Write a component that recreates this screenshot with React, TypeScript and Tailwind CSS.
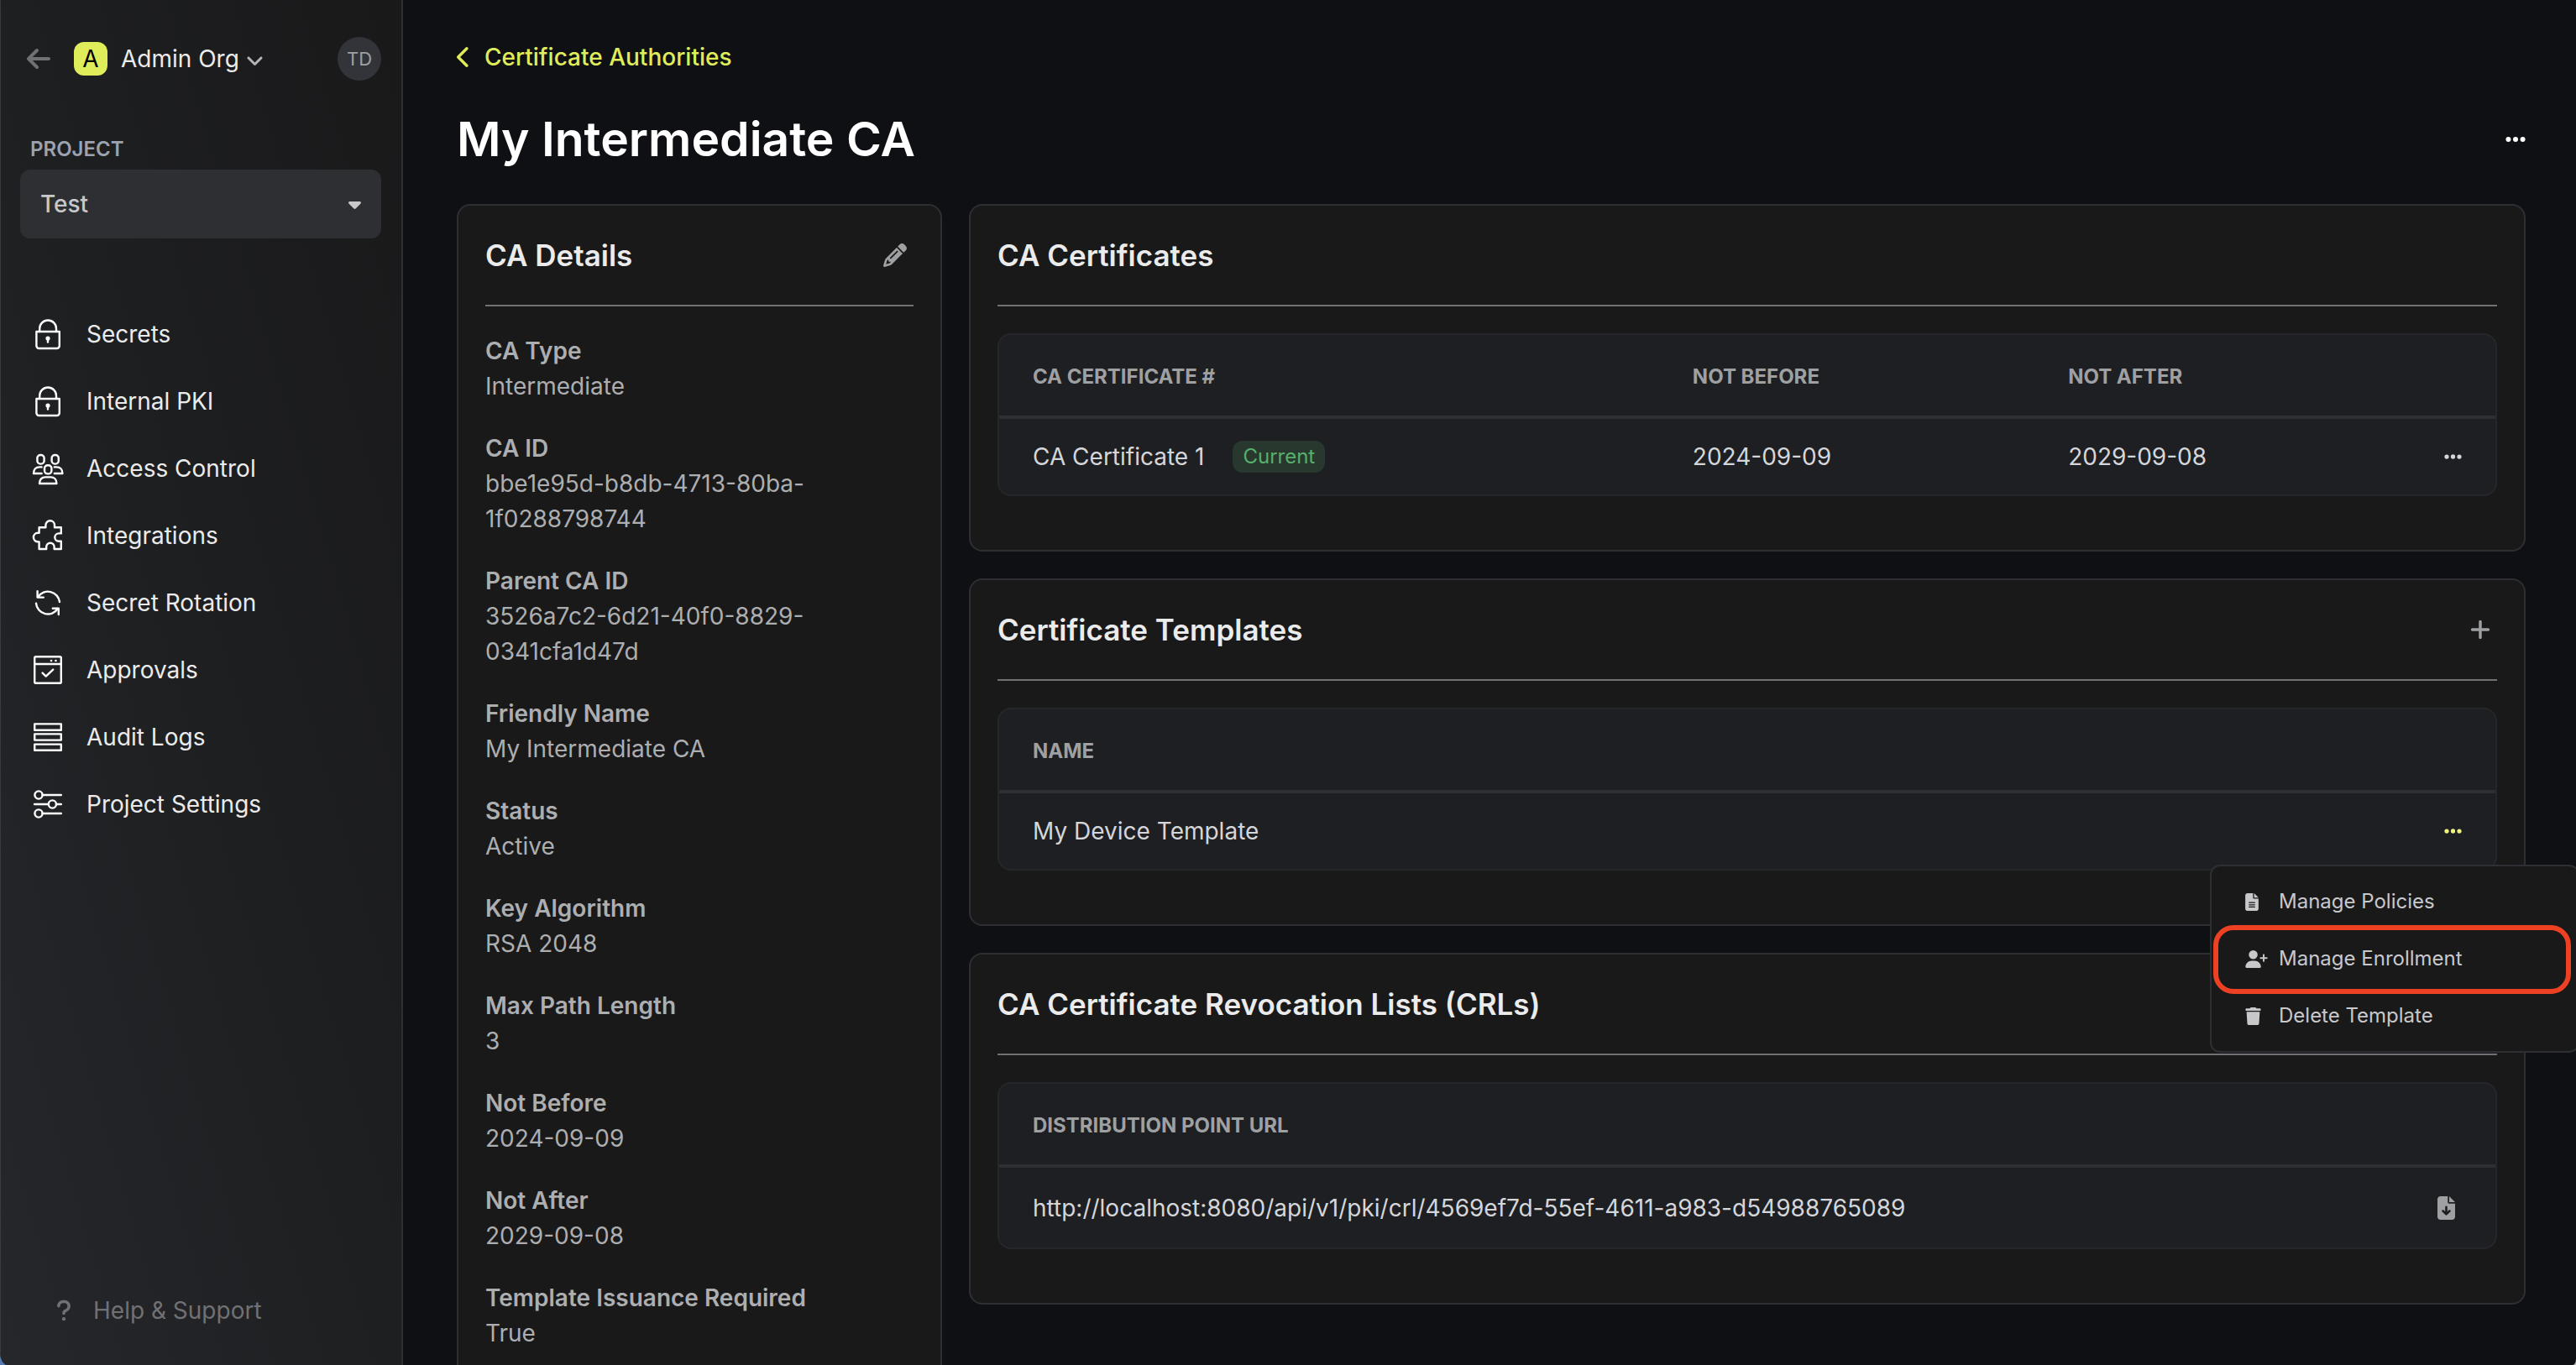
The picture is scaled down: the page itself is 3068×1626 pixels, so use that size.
import type { ReactNode } from "react";
import {
  FaAngleDown,
  FaArrowLeft,
  FaCaretDown,
  FaChevronLeft,
  FaEllipsis,
  FaFileArrowDown,
  FaFileLines,
  FaPencil,
  FaPlus,
  FaQuestion,
  FaTrash,
  FaUserPlus,
} from "react-icons/fa6";

function LineIcon({ children }: { children: ReactNode }) {
  return (
    <svg
      viewBox="0 0 40 40"
      className="size-10 shrink-0"
      fill="none"
      stroke="white"
      strokeWidth="2.4"
      strokeLinecap="round"
      strokeLinejoin="round"
      aria-hidden="true"
    >
      {children}
    </svg>
  );
}

const lockIcon = (
  <LineIcon>
    <path d="M6.4 17h27.4v17a3 3 0 0 1-3 3H9.4a3 3 0 0 1-3-3z" />
    <path d="M10.2 17v-3.6a9.9 9.9 0 0 1 19.8 0V17" />
    <circle cx="20" cy="25" r="1.4" fill="white" />
    <path d="M20 26v3.6" />
  </LineIcon>
);

const groupIcon = (
  <LineIcon>
    <rect x="7.4" y="4" width="8.2" height="10.6" rx="3.8" />
    <rect x="24.6" y="4" width="8.2" height="10.6" rx="3.8" />
    <rect x="16" y="16.2" width="8.4" height="10.2" rx="3.8" />
    <path d="M12.6 26H3c0-4.8 2.8-7.6 7-7.6h2.6" />
    <path d="M27.8 26h9.6c0-4.8-2.8-7.6-7-7.6h-2.6" />
    <path d="M10 38c0-4.8 2.8-7.6 7-7.6h6.4c4.2 0 7 2.8 7 7.6z" />
  </LineIcon>
);

const puzzleIcon = (
  <LineIcon>
    <path d="M9.6 10.2H17.4V7.6a5.3 5.3 0 0 1 10.6 0V10.2H35.8V17.4H33a4.7 4.7 0 0 0 0 9.4H35.8V36H27.6V33.4a4.7 4.7 0 0 0-9.4 0V36H9.6V27.4H8.2a5.3 5.3 0 0 1 0-10.6H9.6Z" />
  </LineIcon>
);

const rotateIcon = (
  <LineIcon>
    <path d="M34 19A14 14 0 0 0 8.4 13" />
    <path d="M7.6 6.2V13.6H14.8" />
    <path d="M6 20.6A14 14 0 0 0 31.8 27" />
    <path d="M32.8 34V26.8H25.8" />
  </LineIcon>
);

const approvalIcon = (
  <LineIcon>
    <rect x="4.2" y="4.2" width="31.6" height="31.6" rx="1.6" />
    <path d="M4.2 13H35.8" />
    <path d="M24 9h.1M29.4 9h.1" strokeWidth="2.6" />
    <path d="M13.6 23.6L17.7 27.6L26.2 19.6" />
  </LineIcon>
);

const logsIcon = (
  <LineIcon>
    <rect x="4.2" y="4.4" width="31.6" height="7.4" />
    <rect x="4.2" y="16.4" width="31.6" height="7.2" />
    <rect x="4.2" y="28.6" width="31.6" height="7.2" />
  </LineIcon>
);

const settingsIcon = (
  <LineIcon>
    <circle cx="9" cy="9" r="4.6" />
    <path d="M13.6 9H35.8" />
    <circle cx="25.4" cy="20" r="4.6" />
    <path d="M4 20H20.8M30 20H35.8" />
    <circle cx="9" cy="31" r="4.6" />
    <path d="M13.6 31H35.8" />
  </LineIcon>
);

const navItems: { label: string; icon: ReactNode }[] = [
  { label: "Secrets", icon: lockIcon },
  { label: "Internal PKI", icon: lockIcon },
  { label: "Access Control", icon: groupIcon },
  { label: "Integrations", icon: puzzleIcon },
  { label: "Secret Rotation", icon: rotateIcon },
  { label: "Approvals", icon: approvalIcon },
  { label: "Audit Logs", icon: logsIcon },
  { label: "Project Settings", icon: settingsIcon },
];

const details: [string, string][] = [
  ["CA Type", "Intermediate"],
  ["CA ID", "bbe1e95d-b8db-4713-80ba-1f0288798744"],
  ["Parent CA ID", "3526a7c2-6d21-40f0-8829-0341cfa1d47d"],
  ["Friendly Name", "My Intermediate CA"],
  ["Status", "Active"],
  ["Key Algorithm", "RSA 2048"],
  ["Max Path Length", "3"],
  ["Not Before", "2024-09-09"],
  ["Not After", "2029-09-08"],
  ["Template Issuance Required", "True"],
];

function Sidebar() {
  return (
    <aside className="flex w-[480px] shrink-0 flex-col border-r-2 border-l border-r-[#2d2f33] border-l-[#3a3b3e] bg-linear-to-tr from-[#26272b] via-[#1e1f21] to-[#19191a]">
      <div className="mt-11 flex h-[52px] items-center pr-6 pl-[31px]">
        <button type="button" aria-label="Back" className="text-[#707174]">
          <FaArrowLeft className="h-8 w-7" />
        </button>
        <button type="button" className="ml-7 flex items-center text-[28px] leading-[42px] text-[#ebebeb]">
          <span className="mr-4 flex size-10 items-center justify-center rounded-xl bg-[#e0ed5a] text-black">A</span>
          Admin Org
          <FaAngleDown className="mt-1 ml-2 h-6 w-[21px] text-[#b5b5b7]" />
        </button>
        <button
          type="button"
          className="ml-auto flex size-[52px] items-center justify-center rounded-full bg-[#323439] text-[22px] text-[#9fa0a2]"
        >
          TD
        </button>
      </div>

      <div className="mt-16 px-6 pl-[23px]">
        <label htmlFor="project" className="block pl-3 text-[24px] leading-9 font-semibold text-[#9ca3af]">
          PROJECT
        </label>
        <div className="relative mt-1.5 flex">
          <select
            id="project"
            className="h-[82px] w-full appearance-none rounded-xl bg-[#2d2f33] px-6 text-[28px] font-medium text-[#c8c8cb]"
          >
            <option>Test</option>
          </select>
          <FaCaretDown className="pointer-events-none absolute inset-y-0 right-6 my-auto h-6 w-[15px] text-[#c8c8cb]" />
        </div>
      </div>

      <nav className="mt-[74px] flex flex-col">
        {navItems.map((item) => (
          <a
            key={item.label}
            href="#"
            className="flex h-20 items-center gap-[26px] pl-9 text-[28px] leading-[42px] text-[#ebebeb]"
          >
            {item.icon}
            {item.label}
          </a>
        ))}
      </nav>

      <button
        type="button"
        className="mt-auto mb-11 flex items-center gap-[26px] pl-[66px] text-[28px] leading-[42px] text-[#707174]"
      >
        <FaQuestion className="h-7 w-[18px]" />
        Help &amp; Support
      </button>
    </aside>
  );
}

function Card({ title, action, children }: { title: string; action?: ReactNode; children: ReactNode }) {
  return (
    <section className="rounded-2xl border-2 border-[#2d2f33] bg-[#19191a] p-8">
      <header className="flex items-center justify-between border-b-2 border-[#707174] pb-8">
        <h2 className="text-[35px] leading-[54px] font-semibold text-[#ebebeb]">{title}</h2>
        {action}
      </header>
      <div className="mt-8">{children}</div>
    </section>
  );
}

function TableFrame({ children }: { children: ReactNode }) {
  return (
    <div className="mb-8 rounded-2xl border-2 border-[#26272a] bg-[#1e1f22]">
      <table className="w-full border-separate border-spacing-0 text-left text-[28px] leading-[42px] text-[#d5d6d9]">
        {children}
      </table>
    </div>
  );
}

function Th({ children, className = "" }: { children?: ReactNode; className?: string }) {
  return (
    <th className={`border-b-4 border-[#2d2f33] px-10 pt-8 pb-7 text-[24px] leading-9 font-bold text-[#9fa0a2] ${className}`}>
      {children}
    </th>
  );
}

function ActionMenu() {
  return (
    <div
      role="menu"
      className="absolute top-full -right-[140px] z-10 mt-7 w-[440px] rounded-xl border-2 border-[#2d2f33] bg-[#19191a] py-2 text-[24px] leading-9 text-[#c8c8cb]"
    >
      <MenuItem icon={<FaFileLines className="h-[21px] w-4" />} label="Manage Policies" />
      <MenuItem icon={<FaUserPlus className="h-[21px] w-[27px]" />} label="Manage Enrollment" highlighted />
      <MenuItem icon={<FaTrash className="h-[21px] w-[19px]" />} label="Delete Template" />
    </div>
  );
}

function MenuItem({ icon, label, highlighted = false }: { icon: ReactNode; label: string; highlighted?: boolean }) {
  return (
    <button type="button" role="menuitem" className="relative flex h-[68px] w-full items-center gap-3 pl-10">
      <span className="flex w-7">{icon}</span>
      {label}
      {highlighted && (
        <span className="pointer-events-none absolute -top-1.5 right-2 -bottom-2 left-0.5 rounded-3xl border-[6px] border-[#ee4023]" />
      )}
    </button>
  );
}

export default function App() {
  return (
    <div className="h-screen overflow-hidden bg-linear-to-r from-[#5478b0] to-[#b9b9b9] font-[Inter,sans-serif]">
      <div className="flex h-full overflow-hidden rounded-br-[4px_7px] rounded-bl-[9px_16px] bg-[#0e1014]">
        <Sidebar />
        <main className="min-w-0 flex-1 overflow-hidden pt-[47px] pr-[60px] pl-16">
          <a href="#" className="flex w-fit items-center gap-4 text-[28px] leading-[42px] font-medium text-[#e0ed5a]">
            <FaChevronLeft className="h-7 w-[17px]" />
            Certificate Authorities
          </a>

          <div className="mt-8 mb-8 flex items-center justify-between">
            <h1 className="text-[57px] leading-[90px] font-semibold text-white">My Intermediate CA</h1>
            <button type="button" aria-label="CA actions" className="text-white">
              <FaEllipsis className="h-7 w-6" />
            </button>
          </div>

          <div className="flex gap-8">
            <div className="w-[578px] shrink-0">
              <Card
                title="CA Details"
                action={
                  <button type="button" aria-label="Edit CA" className="px-2 text-[#9fa0a2]">
                    <FaPencil className="size-7" />
                  </button>
                }
              >
                <dl className="text-[28px] leading-[42px] text-[#adaeb0]">
                  {details.map(([term, value]) => (
                    <div key={term} className="mb-8">
                      <dt className="font-semibold">{term}</dt>
                      <dd>{value}</dd>
                    </div>
                  ))}
                </dl>
              </Card>
            </div>

            <div className="flex min-w-0 flex-1 flex-col gap-8">
              <Card title="CA Certificates">
                <TableFrame>
                  <thead>
                    <tr>
                      <Th className="w-[44.1%]">CA CERTIFICATE #</Th>
                      <Th className="w-[25.1%]">NOT BEFORE</Th>
                      <Th>NOT AFTER</Th>
                      <Th />
                    </tr>
                  </thead>
                  <tbody>
                    <tr>
                      <td className="px-10 py-6">
                        <div className="flex items-center gap-[34px]">
                          CA Certificate 1
                          <span className="rounded-xl bg-[#29382e] px-3 text-[24px] leading-[38px] text-[#56b06c]">
                            Current
                          </span>
                        </div>
                      </td>
                      <td className="px-10">2024-09-09</td>
                      <td className="px-10">2029-09-08</td>
                      <td className="px-10">
                        <button type="button" aria-label="Certificate actions" className="ml-auto flex">
                          <FaEllipsis className="h-6 w-[21px]" />
                        </button>
                      </td>
                    </tr>
                  </tbody>
                </TableFrame>
              </Card>

              <Card
                title="Certificate Templates"
                action={
                  <button type="button" aria-label="Add template" className="px-2 text-[#9fa0a2]">
                    <FaPlus className="h-7 w-6" />
                  </button>
                }
              >
                <TableFrame>
                  <thead>
                    <tr>
                      <Th>NAME</Th>
                      <Th />
                    </tr>
                  </thead>
                  <tbody>
                    <tr>
                      <td className="px-10 py-6">My Device Template</td>
                      <td className="px-10">
                        <div className="relative ml-auto w-fit">
                          <button type="button" aria-label="Template actions" className="flex text-[#f0f47c]">
                            <FaEllipsis className="h-6 w-[21px]" />
                          </button>
                          <ActionMenu />
                        </div>
                      </td>
                    </tr>
                  </tbody>
                </TableFrame>
              </Card>

              <Card title="CA Certificate Revocation Lists (CRLs)">
                <TableFrame>
                  <thead>
                    <tr>
                      <Th>DISTRIBUTION POINT URL</Th>
                      <Th />
                    </tr>
                  </thead>
                  <tbody>
                    <tr>
                      <td className="h-[95px] px-10">
                        http://localhost:8080/api/v1/pki/crl/4569ef7d-55ef-4611-a983-d54988765089
                      </td>
                      <td className="px-10">
                        <button type="button" aria-label="Download CRL" className="ml-auto flex px-2 text-[#9fa0a2]">
                          <FaFileArrowDown className="h-7 w-[21px]" />
                        </button>
                      </td>
                    </tr>
                  </tbody>
                </TableFrame>
              </Card>
            </div>
          </div>
        </main>
      </div>
    </div>
  );
}
